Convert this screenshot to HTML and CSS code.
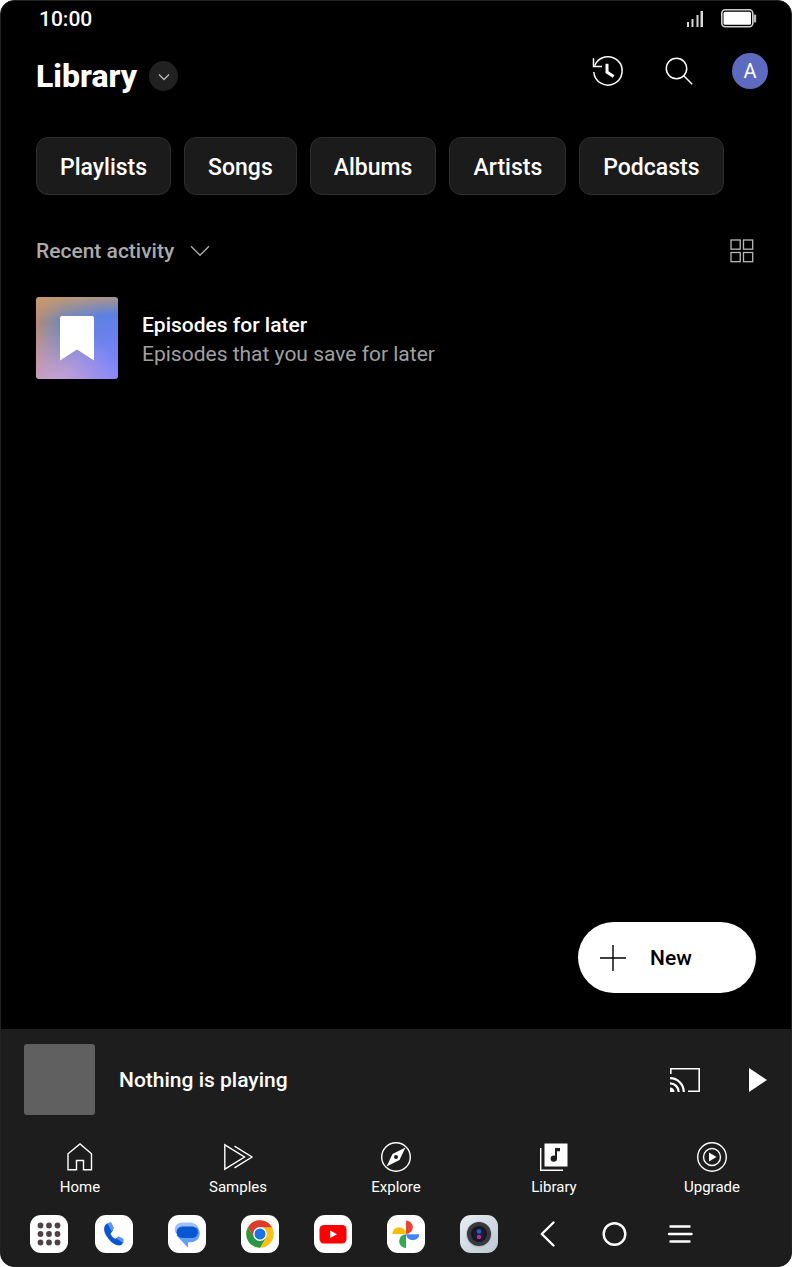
FILE: index.html
```html
<!DOCTYPE html>
<html lang="en">
  <head>
    <meta charset="UTF-8" />
    <meta name="viewport" content="width=device-width, initial-scale=1.0" />
    <title>Library</title>
    <link rel="stylesheet" href="styles.css">
  </head>
  <body>
    <div class="screen">
      <div class="status-bar">
        <span>10:00</span>
        <div class="status-icons">
          <svg width="18" height="18" viewBox="0 0 18 18" fill="#d8d8d8">
            <rect x="0" y="12" width="2" height="5" />
            <rect x="4.500" y="9" width="2" height="8" />
            <rect x="9.500" y="5" width="2" height="12" />
            <rect x="13.500" y="1" width="2.500" height="16" />
          </svg>
          <svg width="37" height="20" viewBox="0 0 37 20">
            <rect x="1.800" y="0.800" width="31" height="17" rx="3.500" fill="none" stroke="#d0d0d0" stroke-width="1.600" />
            <rect x="3.500" y="2.800" width="27.500" height="13" rx="1.500" fill="#fff" />
            <rect x="33.600" y="5.500" width="2.600" height="8" rx="1" fill="#bbb" />
          </svg>
        </div>
      </div>

      <header class="header">
        <div class="brand">
          <h1>Library</h1>
          <button type="button" class="switcher" aria-label="Change view">
            <svg width="12" height="8" viewBox="0 0 12 8" fill="none" stroke="#bbb" stroke-width="1.3">
              <path d="M1 1.5l5 5 5-5" />
            </svg>
          </button>
        </div>
        <div class="header-actions">
          <button type="button" class="icon-button" aria-label="History">
            <svg width="36" height="36" viewBox="0 0 36 36" fill="none" stroke="#fff" stroke-width="1.5">
              <path d="M4.700 12.800A14.200 14.200 0 1 1 3.800 19" />
              <path d="M3.500 5.200v8.300H12" />
              <path d="M17 10.800v8.300l6.600 4.400" stroke-width="3" />
            </svg>
          </button>
          <button type="button" class="icon-button" aria-label="Search">
            <svg width="36" height="36" viewBox="0 0 36 36" fill="none" stroke="#fff" stroke-width="1.5">
              <circle cx="15.5" cy="15.5" r="10.2" />
              <path d="M22.8 22.8l8.4 8.4" />
            </svg>
          </button>
          <button type="button" class="avatar" aria-label="Account">A</button>
        </div>
      </header>

      <main class="content">
        <div class="chips">
          <button type="button" class="chip">Playlists</button>
          <button type="button" class="chip">Songs</button>
          <button type="button" class="chip">Albums</button>
          <button type="button" class="chip">Artists</button>
          <button type="button" class="chip">Podcasts</button>
        </div>

        <div class="sort-row">
          <button type="button" class="sort-button">
            Recent activity
            <svg width="20" height="12" viewBox="0 0 20 12" fill="none" stroke="#aaa" stroke-width="1.4">
              <path d="M1 1.2l9 9 9-9" />
            </svg>
          </button>
          <button type="button" class="grid-button" aria-label="Grid view">
            <svg width="24" height="24" viewBox="0 0 24 24" fill="none" stroke="#b8b8b8" stroke-width="1.3">
              <rect x="1" y="1" width="9.2" height="9.2" />
              <rect x="13.5" y="1" width="9.2" height="9.2" />
              <rect x="1" y="13.5" width="9.2" height="9.2" />
              <rect x="13.5" y="13.5" width="9.2" height="9.2" />
            </svg>
          </button>
        </div>

        <ul class="list">
          <li>
            <a href="#" class="item">
              <span class="cover">
                <svg width="36" height="46" viewBox="0 0 36 46" fill="#fff">
                  <path d="M3 1h30a2 2 0 0 1 2 2v42.500L18 34.500 1 45.500V3a2 2 0 0 1 2-2z" />
                </svg>
              </span>
              <span class="item-text">
                <span class="item-title">Episodes for later</span>
                <span class="item-subtitle">Episodes that you save for later</span>
              </span>
            </a>
          </li>
        </ul>

        <button type="button" class="new-button">
          <svg width="26" height="26" viewBox="0 0 26 26" fill="none" stroke="#000" stroke-width="1.4">
            <path d="M13 0v26M0 13h26" />
          </svg>
          New
        </button>
      </main>

      <footer class="bottom">
        <div class="player">
          <div class="player-cover"></div>
          <span class="player-title">Nothing is playing</span>
          <button type="button" class="player-button" aria-label="Cast">
            <svg width="30" height="24" viewBox="0 0 30 24" fill="none" stroke="#fff">
              <path d="M0.800 6V0.800h28.400v22.400H18" stroke-width="1.600" />
              <path d="M0 10.200A13.800 13.800 0 0 1 13.800 24M0 15.300A8.700 8.700 0 0 1 8.700 24" stroke-width="2.200" />
              <path d="M0 19.500A4.500 4.500 0 0 1 4.500 24H0z" fill="#fff" stroke="none" />
            </svg>
          </button>
          <button type="button" class="player-button" aria-label="Play">
            <svg width="18" height="24" viewBox="0 0 18 24" fill="#fff">
              <path d="M0 0l18 12L0 24z" />
            </svg>
          </button>
        </div>

        <nav class="tabs">
          <a href="#" class="tab">
            <svg width="32" height="32" viewBox="0 0 32 32" fill="none" stroke="#fff" stroke-width="1.4">
              <path d="M4 28.800V12.800L16 3l11.500 9.800v16h-8V19.500h-7v9.300z" />
            </svg>
            Home
          </a>
          <a href="#" class="tab">
            <svg width="32" height="32" viewBox="0 0 32 32" fill="none" stroke="#fff" stroke-width="1.4">
              <path d="M2.800 3.800v24.400L22.500 16z" />
              <path d="M12.500 5.200L30 16 12.500 26.800" />
            </svg>
            Samples
          </a>
          <a href="#" class="tab">
            <svg width="32" height="32" viewBox="0 0 32 32">
              <circle cx="16" cy="16" r="14.300" fill="none" stroke="#fff" stroke-width="1.400" />
              <path d="M25.500 6.500l-6 12.500L6.500 25.500l6-12.500z" fill="#fff" />
              <circle cx="16" cy="16" r="2" fill="#1d1d1d" />
            </svg>
            Explore
          </a>
          <a href="#" class="tab">
            <svg width="32" height="32" viewBox="0 0 32 32">
              <path d="M6.500 2.500H29.500V25.500H6.500z" fill="#fff" />
              <path d="M2.700 7v22.300H25" fill="none" stroke="#fff" stroke-width="1.400" />
              <path d="M17 7h5v3.200h-3v7.300h-2z" fill="#1d1d1d" />
              <circle cx="15.800" cy="17.600" r="3.200" fill="#1d1d1d" />
            </svg>
            Library
          </a>
          <a href="#" class="tab">
            <svg width="32" height="32" viewBox="0 0 32 32">
              <circle cx="16" cy="16" r="14.300" fill="none" stroke="#fff" stroke-width="1.400" />
              <circle cx="16" cy="16" r="8.500" fill="none" stroke="#fff" stroke-width="1.400" />
              <path d="M13 11.500l7.500 4.500-7.500 4.500z" fill="#fff" />
            </svg>
            Upgrade
          </a>
        </nav>

        <div class="dock">
          <button type="button" class="app" aria-label="All apps">
            <svg width="38" height="38" viewBox="0 0 38 38" fill="#4e4245">
              <circle cx="10.500" cy="10.500" r="2.900" /><circle cx="19" cy="10.500" r="2.900" /><circle cx="27.500" cy="10.500" r="2.900" />
              <circle cx="10.500" cy="19" r="2.900" /><circle cx="19" cy="19" r="2.900" /><circle cx="27.500" cy="19" r="2.900" />
              <circle cx="10.500" cy="27.500" r="2.900" /><circle cx="19" cy="27.500" r="2.900" /><circle cx="27.500" cy="27.500" r="2.900" />
            </svg>
          </button>

          <div class="apps">
            <button type="button" class="app" aria-label="Phone">
              <svg width="38" height="38" viewBox="0 0 38 38">
                <path d="M12.500 8.200C8 10.500 8.300 16 11.500 21c3.500 5.500 8 9.500 13 9.500 1.600 0 2.800-1 3.800-3.200l-5-5.100-3 1.600c-2-1-4-3-4.800-5.100l2.500-3.200z" fill="#0957d0" />
                <path d="M12.500 8.200l2.500-.900c.8-.2 1.300 0 1.600.7l2 4.500c.3.800.1 1.400-.4 2l-1.700 1.900z" fill="#5b93fb" />
                <path d="M21.500 23.500l1.300-1.500c.5-.5 1.100-.6 1.800-.3l3.300 1.700c.7.400.9.900.8 1.600l-.5 3z" fill="#5b93fb" />
              </svg>
            </button>
            <button type="button" class="app" aria-label="Messages">
              <svg width="38" height="38" viewBox="0 0 38 38">
                <path d="M14 7.500h8c4 0 7.500 2.500 8.500 6v5H8.500C7 17.300 6.700 15.800 6.700 14c0-3.500 3.300-6.500 7.300-6.500z" fill="#9fbfff" />
                <path d="M28.500 12c2.300 1.500 3.300 4 3.300 6.500 0 5-4 8.700-9 8.700H20v5.500L8.500 20.500l3-5z" fill="#669df6" />
                <rect x="8.500" y="11.500" width="21.500" height="11.500" rx="5.700" fill="#0957d0" />
              </svg>
            </button>
            <button type="button" class="app" aria-label="Chrome">
              <svg width="38" height="38" viewBox="0 0 38 38">
                <circle cx="19" cy="19" r="13.700" fill="#fbc116" />
                <path d="M7.100 12.200A13.700 13.700 0 0 1 30.900 12.200H19L13 22.500z" fill="#de3b2f" />
                <path d="M7.100 12.200A13.700 13.700 0 0 0 19 32.700L24.900 22.400 19 25.800 13.100 22.500z" fill="#279847" />
                <circle cx="19" cy="19" r="6.900" fill="#fff" />
                <circle cx="19" cy="19" r="5.500" fill="#1b73e8" />
              </svg>
            </button>
            <button type="button" class="app" aria-label="YouTube">
              <svg width="38" height="38" viewBox="0 0 38 38">
                <rect x="5.500" y="10" width="27" height="18.500" rx="4.500" fill="#f00" />
                <path d="M16.200 15.600l6.800 3.700-6.800 3.700z" fill="#fff" />
              </svg>
            </button>
            <button type="button" class="app" aria-label="Photos">
              <svg width="38" height="38" viewBox="0 0 38 38">
                <path d="M19 5.500a6.800 6.800 0 0 1 0 13.600z" fill="#e94435" />
                <path d="M32.500 19.200a6.800 6.800 0 0 1-13.500 0z" fill="#4285f4" />
                <path d="M19 33a6.800 6.800 0 0 1 0-13.700z" fill="#34a853" />
                <path d="M5.300 19.100a6.800 6.800 0 0 1 13.600 0z" fill="#fbbc04" />
              </svg>
            </button>
            <button type="button" class="app app-camera" aria-label="Camera">
              <svg width="38" height="38" viewBox="0 0 38 38">
                <circle cx="19" cy="19.500" r="13" fill="#b6c0ca" />
                <circle cx="19" cy="19" r="12" fill="#39383e" />
                <circle cx="19" cy="19" r="8" fill="#18171e" />
                <circle cx="19" cy="19" r="5.500" fill="#211b37" />
                <circle cx="19" cy="16.500" r="2.300" fill="#1b62c4" />
                <circle cx="19" cy="22" r="2.200" fill="#a0359b" />
              </svg>
            </button>
          </div>

          <div class="system-nav">
            <button type="button" class="nav-button" aria-label="Back">
              <svg width="38" height="38" viewBox="0 0 38 38" fill="none" stroke="#fff" stroke-width="2.400" stroke-linecap="round" stroke-linejoin="round">
                <path d="M24.500 7.500L12.800 19l11.700 11.500" />
              </svg>
            </button>
            <button type="button" class="nav-button" aria-label="Home screen">
              <svg width="38" height="38" viewBox="0 0 38 38" fill="none" stroke="#fff" stroke-width="2.400">
                <circle cx="19.500" cy="19" r="10.800" />
              </svg>
            </button>
            <button type="button" class="nav-button" aria-label="Recent apps">
              <svg width="38" height="38" viewBox="0 0 38 38" fill="none" stroke="#fff" stroke-width="2.400" stroke-linecap="round">
                <path d="M9.500 11.500h19M8 19h22.500M9.500 26.500h19" />
              </svg>
            </button>
          </div>
        </div>
      </footer>
    </div>
  </body>
</html>
```

FILE: styles.css
```css
* {
  box-sizing: border-box;
  margin: 0;
  padding: 0;
  font-family: Roboto, Arial, sans-serif;
}

body {
  background-color: #fff;
  color: #fff;
}

button {
  background: none;
  border: none;
  color: inherit;
  cursor: pointer;
}

a {
  color: inherit;
  text-decoration: none;
}

svg {
  display: block;
  flex-shrink: 0;
}

.screen {
  display: flex;
  flex-direction: column;
  min-height: 100vh;
  background-color: #000;
  border: 1px solid #222;
  border-radius: 14px;
  overflow: hidden;
}

/* Status bar */
.status-bar {
  display: flex;
  justify-content: space-between;
  align-items: center;
  height: 36px;
  padding: 0 34px 0 38px;
  font-size: 21px;
  font-weight: 500;
}

.status-icons {
  display: flex;
  align-items: center;
  gap: 15px;
}

/* Header */
.header {
  display: flex;
  justify-content: space-between;
  align-items: center;
  height: 68px;
  padding: 0 23px 0 35px;
}

.brand {
  display: flex;
  align-items: center;
  gap: 12px;
  padding-top: 10px;
}

.brand h1 {
  font-size: 32px;
  font-weight: 800;
  line-height: 36px;
}

.switcher {
  display: flex;
  justify-content: center;
  align-items: center;
  width: 29px;
  height: 30px;
  padding-top: 2px;
  border-radius: 50%;
  background-color: #212121;
}

.header-actions {
  display: flex;
  gap: 35px;
}

.avatar {
  width: 36px;
  height: 36px;
  border-radius: 50%;
  background-color: #5c6bc0;
  font-size: 20px;
}

/* Content */
.content {
  flex: 1;
  display: flex;
  flex-direction: column;
  padding: 32px 35px 36px;
}

.chips {
  display: flex;
  gap: 13px;
}

.chip {
  height: 58px;
  padding: 2px 23px 0;
  border: 1px solid #2e2e2e;
  border-radius: 12px;
  background-color: #1b1b1b;
  font-size: 23px;
  font-weight: 500;
}

.sort-row {
  display: flex;
  justify-content: space-between;
  align-items: center;
  height: 36px;
  margin: 38px 0 28px;
}

.sort-button {
  display: flex;
  align-items: center;
  gap: 16px;
  color: #aaa;
  font-size: 21px;
  font-weight: 500;
}

.grid-button {
  padding: 2px;
}

.list {
  list-style: none;
}

.item {
  display: flex;
  align-items: center;
  gap: 24px;
}

.cover {
  display: flex;
  justify-content: center;
  align-items: center;
  width: 82px;
  height: 82px;
  border-radius: 3px;
  background:
    radial-gradient(circle at 25% 115%, #dba6d8 0%, rgba(190, 145, 230, 0) 60%),
    radial-gradient(circle at 100% 100%, #8585ff 0%, rgba(133, 133, 255, 0) 60%),
    linear-gradient(175deg, #c79b6d 0%, rgba(170, 145, 130, 0) 28%),
    linear-gradient(95deg, #bd8b75 0%, #6e88b8 32%, #5a80e2 75%);
}

.item-text {
  display: flex;
  flex-direction: column;
  padding-top: 4px;
  font-size: 21px;
  line-height: 29px;
}

.item-title {
  font-weight: 500;
}

.item-subtitle {
  color: #a0a0a0;
}

.new-button {
  display: flex;
  align-items: center;
  align-self: flex-end;
  gap: 24px;
  width: 178px;
  height: 71px;
  margin-top: auto;
  padding: 0 22px;
  border-radius: 36px;
  background-color: #fff;
  color: #000;
  font-size: 21px;
  font-weight: 500;
}

/* Bottom area */
.bottom {
  background-color: #1d1d1d;
}

.player {
  display: flex;
  align-items: center;
  padding: 15px 24px 15px 23px;
}

.player-cover {
  width: 71px;
  height: 71px;
  border-radius: 3px;
  background-color: #606060;
}

.player-title {
  flex: 1;
  margin-left: 24px;
  font-size: 21px;
  font-weight: 500;
}

.player-button {
  margin-left: 49px;
}

.tabs {
  display: grid;
  grid-template-columns: repeat(5, 1fr);
  padding-top: 11px;
}

.tab {
  display: flex;
  flex-direction: column;
  align-items: center;
  gap: 4px;
  font-size: 15px;
  line-height: 20px;
}

.dock {
  display: flex;
  align-items: center;
  padding: 18px 29px 13px;
}

.apps {
  display: flex;
  gap: 35px;
  margin: 0 31px 0 27px;
}

.app {
  border-radius: 11px;
  background-color: #fff;
}

.app-camera {
  background: linear-gradient(135deg, #e9eef3, #bcc8d3);
}

.system-nav {
  display: flex;
  gap: 28px;
}
```
